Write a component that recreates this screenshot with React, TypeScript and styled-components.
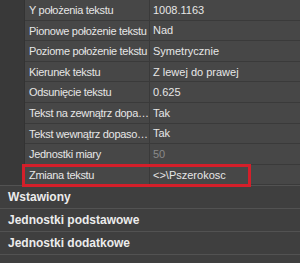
import styled, {createGlobalStyle} from "styled-components";

const GlobalStyle = createGlobalStyle`
  html, body {
    margin: 0;
    padding: 0;
    background: #3f3f3f;
  }
`

type PropRow = {
    name: string
    value: string
    dim?: boolean
    marked?: boolean
}

const rows: PropRow[] = [
    {name: "Y położenia tekstu", value: "1008.1163"},
    {name: "Pionowe położenie tekstu", value: "Nad"},
    {name: "Poziome położenie tekstu", value: "Symetrycznie"},
    {name: "Kierunek tekstu", value: "Z lewej do prawej"},
    {name: "Odsunięcie tekstu", value: "0.625"},
    {name: "Tekst na zewnątrz dopasowania", value: "Tak"},
    {name: "Tekst wewnątrz dopasowania", value: "Tak"},
    {name: "Jednostki miary", value: "50", dim: true},
    {name: "Zmiana tekstu", value: "<>\\Pszerokosc", marked: true},
]

const sections = ["Wstawiony", "Jednostki podstawowe", "Jednostki dodatkowe"]

export default function App() {
    return (
        <>
            <GlobalStyle/>
            <StyledPanel>
                {rows.map(row => (
                    <StyledRow key={row.name}>
                        <StyledGutter/>
                        <StyledName>{row.name}</StyledName>
                        <StyledValue $dim={row.dim}>{row.value}</StyledValue>
                        {row.marked && <StyledMark/>}
                    </StyledRow>
                ))}
                {sections.map(title => (
                    <StyledSection key={title}>{title}</StyledSection>
                ))}
                <StyledSection/>
            </StyledPanel>
        </>
    )
}

const StyledPanel = styled.div`
  width: 300px;
  height: 263px;
  overflow: hidden;
  display: flex;
  flex-direction: column;
  background: #3f3f3f;
  font-family: "Liberation Sans", Arial, sans-serif;
  font-size: 11px;
  color: #e6e6e6;
`

const StyledRow = styled.div`
  position: relative;
  display: grid;
  grid-template-columns: 25px 125px minmax(0, 1fr);
  height: 20.6px;
  flex-shrink: 0;
`

const StyledGutter = styled.div`
  background: #393939;
  border-right: 1px solid #333;
`

const StyledName = styled.div`
  min-width: 0;
  display: block;
  line-height: 20px;
  padding-left: 4px;
  background: #474747;
  border-bottom: 1px solid #3a3a3a;
  border-right: 1px solid #3a3a3a;
  letter-spacing: -0.3px;
  white-space: nowrap;
  overflow: hidden;
  text-overflow: ellipsis;
`

const StyledValue = styled.div<{ $dim?: boolean }>`
  min-width: 0;
  display: flex;
  align-items: center;
  padding-left: 3px;
  background: #474747;
  border-bottom: 1px solid #3a3a3a;
  white-space: nowrap;
  overflow: hidden;
  color: ${p => p.$dim ? "#8a8a8a" : "#e6e6e6"};
`

const StyledMark = styled.div`
  position: absolute;
  left: 22px;
  top: -1px;
  width: 229px;
  height: 23px;
  box-sizing: border-box;
  border: 3px solid #d41f2a;
  pointer-events: none;
`

const StyledSection = styled.div`
  display: flex;
  align-items: center;
  height: 23px;
  flex-shrink: 0;
  padding-left: 8px;
  background: #3f3f3f;
  border-top: 1px solid #525252;
  box-sizing: border-box;
  font-weight: bold;
  font-size: 12px;
  color: #ececec;
`
